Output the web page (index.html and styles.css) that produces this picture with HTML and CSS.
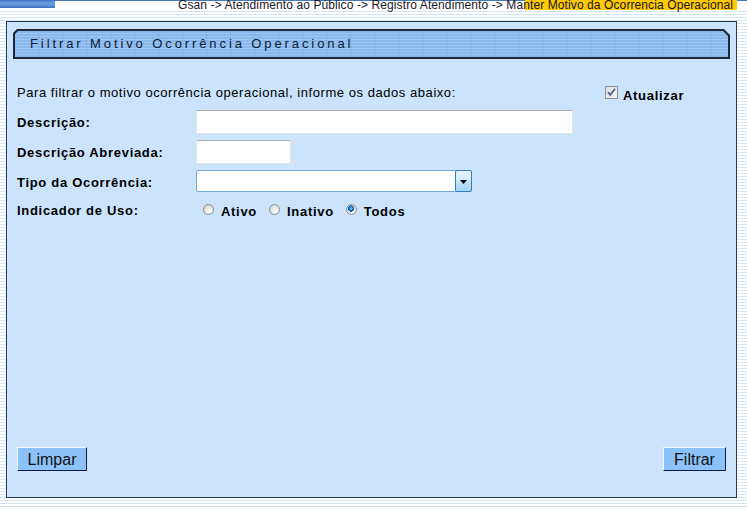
FILE: index.html
```html
<!DOCTYPE html>
<html lang="pt-BR">
<head>
<meta charset="utf-8">
<title>Filtrar Motivo Ocorrência Operacional</title>
<link rel="stylesheet" href="styles.css">
</head>
<body>
<header class="topbar">
  <div class="logo-bar"></div>
  <div class="crumb"><span class="crumb-text">Gsan -&gt; Atendimento ao Público -&gt; Registro Atendimento -&gt; Manter Motivo da Ocorrencia Operacional</span></div>
</header>
<main class="panel">
  <div class="title-bar"><div class="title-inner">Filtrar Motivo Ocorrência Operacional</div></div>
  <div class="content">
    <div class="intro-row">
      <p class="intro">Para filtrar o motivo ocorrência operacional, informe os dados abaixo:</p>
      <div class="refresh">
        <span class="checkbox"><svg width="11" height="11" viewBox="0 0 11 11"><path d="M2 5.2 L4.3 7.8 L9 1.8" fill="none" stroke="#4b5f8c" stroke-width="1.7"/></svg></span>
        <span class="refresh-text">Atualizar</span>
      </div>
    </div>
    <div class="form-grid">
      <div class="field-label">Descrição:</div>
      <div class="ctrl"><div class="text-input wide"></div></div>
      <div class="field-label">Descrição Abreviada:</div>
      <div class="ctrl"><div class="text-input short"></div></div>
      <div class="field-label">Tipo da Ocorrência:</div>
      <div class="ctrl">
        <div class="select"><div class="select-field"></div><div class="select-btn"><svg width="7" height="4" viewBox="0 0 7 4"><path d="M0 0 H7 L3.5 4 Z" fill="#000"/></svg></div></div>
      </div>
      <div class="field-label">Indicador de Uso:</div>
      <div class="ctrl radio-row">
        <div class="radio-item"><span class="radio"></span><span class="radio-text">Ativo</span></div>
        <div class="radio-item"><span class="radio"></span><span class="radio-text">Inativo</span></div>
        <div class="radio-item"><span class="radio checked"></span><span class="radio-text">Todos</span></div>
      </div>
    </div>
  </div>
  <div class="actions">
    <button class="btn btn-limpar">Limpar</button>
    <button class="btn btn-filtrar">Filtrar</button>
  </div>
</main>
</body>
</html>
```
FILE: styles.css
```css
* { box-sizing: border-box; }
html, body { margin: 0; padding: 0; }
body {
  width: 747px;
  height: 509px;
  overflow: hidden;
  font-family: "Liberation Sans", Arial, sans-serif;
  color: #000;
  background: repeating-linear-gradient(to bottom, #ffffff 0, #ffffff 2px, #d4e4f6 2px, #d4e4f6 3px);
}

.topbar {
  height: 10px;
  display: flex;
  background:
    linear-gradient(90deg, transparent 525px, #fdc900 525px, #fdc900 737px, transparent 737px),
    linear-gradient(#4a78bd, #4a78bd) 0 0 / 100% 1px no-repeat,
    #ffffff;
}
.logo-bar {
  width: 55px;
  height: 8px;
  background: linear-gradient(to bottom, #3d6fbd 0, #6a9de0 35%, #5b8fd9 70%, #3a6ebf 100%);
}
.crumb {
  flex: 1;
  height: 10px;
  text-align: right;
  padding-right: 14px;
  font-size: 12px;
  line-height: 12px;
}
.crumb-text {
  display: block;
  margin-top: -1px;
  white-space: nowrap;
  letter-spacing: 0.1px;
  color: #17172a;
}

.panel {
  margin: 11px 0 0 6px;
  width: 731px;
  height: 477px;
  border: 1px solid #26394f;
  background: #cbe4fc;
  display: flex;
  flex-direction: column;
}

.title-bar {
  margin: 7px 6px 0 6px;
  height: 30px;
  padding: 2px;
  background: #1d2939;
  clip-path: polygon(4px 0, calc(100% - 6px) 0, 100% 6px, 100% 100%, 0 100%, 0 4px);
}
.title-inner {
  height: 26px;
  clip-path: polygon(3px 0, calc(100% - 5px) 0, 100% 5px, 100% 100%, 0 100%, 0 3px);
  background:
    repeating-linear-gradient(to right, transparent 0, transparent 23px, rgba(40, 80, 140, 0.10) 23px, rgba(40, 80, 140, 0.10) 24px),
    repeating-linear-gradient(to bottom, #89b8ed 0, #89b8ed 2px, #9fc6f1 2px, #9fc6f1 3px);
  padding-left: 15px;
  font-size: 13px;
  line-height: 26px;
  letter-spacing: 2.9px;
  color: #0c1a33;
  white-space: nowrap;
}

.content {
  padding: 0 10px;
}
.intro-row {
  margin-top: 26px;
  height: 16px;
  display: flex;
  align-items: flex-start;
}
.intro {
  margin: 0;
  width: 588px;
  font-size: 13px;
  line-height: 16px;
  letter-spacing: 0.55px;
  white-space: nowrap;
}
.refresh {
  display: flex;
  align-items: flex-start;
  font-size: 13px;
  font-weight: bold;
  letter-spacing: 0.7px;
}
.checkbox {
  width: 13px;
  height: 13px;
  margin-top: 1px;
  margin-right: 5px;
  border: 1px solid #8e8f90;
  background: linear-gradient(135deg, #dcdcdc, #f6f6f6);
  display: flex;
  align-items: center;
  justify-content: center;
}
.refresh-text {
  margin-top: 3px;
  line-height: 16px;
}

.form-grid {
  margin-top: 9px;
  display: grid;
  grid-template-columns: 179px 1fr;
  grid-template-rows: 24px 24px 24px 20px;
  row-gap: 6px;
}
.field-label {
  align-self: center;
  padding-top: 1px;
  font-size: 13px;
  font-weight: bold;
  letter-spacing: 0.7px;
  line-height: 16px;
  white-space: nowrap;
}
.ctrl {
  display: flex;
  align-items: flex-start;
}
.text-input {
  height: 24px;
  background: #fff;
  border: 1px solid #e2e6eb;
  border-top-color: #a9acb1;
  border-radius: 2px;
}
.text-input.wide { width: 377px; }
.text-input.short { width: 95px; }

.select {
  width: 276px;
  height: 22px;
  display: flex;
  background: #fff;
  border: 1px solid #74a6d6;
  border-radius: 2px;
}
.select-field { flex: 1; }
.select-btn {
  width: 17px;
  height: 22px;
  margin: -1px -1px -1px 0;
  border: 1px solid #3c7fb1;
  border-radius: 2px;
  background: linear-gradient(to bottom, #e6f4fc 0, #d2ecfb 45%, #b9e1f8 55%, #a6d6f3 100%);
  display: flex;
  align-items: center;
  justify-content: center;
  padding-top: 1px;
}

.radio-row {
  padding-left: 7px;
  column-gap: 12px;
}
.radio-item {
  display: flex;
  align-items: flex-start;
  font-size: 13px;
  font-weight: bold;
  letter-spacing: 0.7px;
  line-height: 16px;
}
.radio {
  width: 11px;
  height: 11px;
  margin-top: 4px;
  margin-right: 7px;
  border-radius: 50%;
  border: 1px solid #8c8c8c;
  background: radial-gradient(circle at 65% 70%, #ffffff 0, #eeeeee 35%, #c9c9c9 100%);
}
.radio.checked {
  background:
    radial-gradient(circle at 45% 40%, #8fd6ff 0, #2b86d6 1.6px, #0d4c9a 3px, transparent 3.3px),
    radial-gradient(circle at 65% 70%, #ffffff 0, #eeeeee 35%, #c9c9c9 100%);
}
.radio-text {
  margin-top: 4px;
}

.actions {
  margin-top: auto;
  padding: 0 10px 26px 10px;
  display: flex;
  justify-content: space-between;
}
.btn {
  height: 24px;
  padding: 1px 0 0 0;
  font-family: "Liberation Sans", Arial, sans-serif;
  font-size: 16px;
  line-height: 21px;
  color: #111;
  background: #8dc2f9;
  border: 1px solid;
  border-color: #f2f8ff #0b1b4a #0b1b4a #f2f8ff;
  border-radius: 0;
  text-align: center;
}
.btn-limpar { width: 70px; }
.btn-filtrar { width: 63px; }
```
